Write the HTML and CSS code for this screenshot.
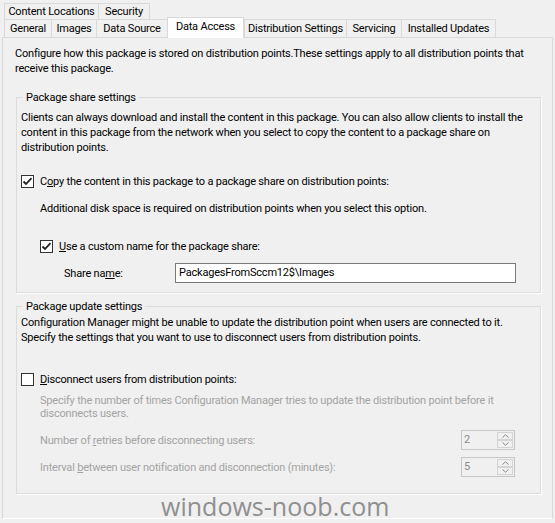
FILE: index.html
```html
<!DOCTYPE html>
<html>
<head>
<meta charset="utf-8">
<link rel="stylesheet" href="styles.css">
</head>
<body>
<div class="dialog">
  <div class="tabstrip">
    <div class="tabrow tabrow-top">
      <div class="tab t-content">Content Locations</div>
      <div class="tab t-security">Security</div>
    </div>
    <div class="tabrow tabrow-bottom">
      <div class="tab t-general">General</div>
      <div class="tab t-images">Images</div>
      <div class="tab t-source">Data Source</div>
      <div class="tab tab-active t-access">Data Access</div>
      <div class="tab t-dist">Distribution Settings</div>
      <div class="tab t-serv">Servicing</div>
      <div class="tab t-upd">Installed Updates</div>
    </div>
  </div>
  <div class="page">
    <p class="intro">Configure how this package is stored on distribution points.These settings apply to all distribution points that receive this package.</p>

    <fieldset class="group group-share">
      <legend>Package share settings</legend>
      <p class="desc">Clients can always download and install the content in this package. You can also allow clients to install the content in this package from the network when you select to copy the content to a package share on distribution points.</p>
      <label class="check-row row-copy">
        <span class="box checked"><svg viewBox="0 0 13 13" width="13" height="13"><path d="M2.5 6.5 L5 9 L10.5 3.2" fill="none" stroke="#1f1f1f" stroke-width="1.8"/></svg></span>
        <span>C<u>o</u>py the content in this package to a package share on distribution points:</span>
      </label>
      <p class="note">Additional disk space is required on distribution points when you select this option.</p>
      <label class="check-row row-custom">
        <span class="box checked"><svg viewBox="0 0 13 13" width="13" height="13"><path d="M2.5 6.5 L5 9 L10.5 3.2" fill="none" stroke="#1f1f1f" stroke-width="1.8"/></svg></span>
        <span><u>U</u>se a custom name for the package share:</span>
      </label>
      <div class="share-row">
        <span class="share-label">Share na<u>m</u>e:</span>
        <div class="textbox">PackagesFromSccm12$\Images</div>
      </div>
    </fieldset>

    <fieldset class="group group-update">
      <legend>Package update settings</legend>
      <p class="desc">Configuration Manager might be unable to update the distribution point when users are connected to it. Specify the settings that you want to use to disconnect users from distribution points.</p>
      <label class="check-row row-disconnect">
        <span class="box"></span>
        <span><u>D</u>isconnect users from distribution points:</span>
      </label>
      <p class="disabled-text">Specify the number of times Configuration Manager tries to update the distribution point before it disconnects users.</p>
      <div class="spin-row row-retries">
        <span class="disabled-label">Number of <u>r</u>etries before disconnecting users:</span>
        <div class="spinner">
          <span class="spin-value">2</span>
          <span class="spin-buttons">
            <span class="spin-btn"><svg viewBox="0 0 7 4" width="7" height="4"><path d="M0.5 3.5 L3.5 0.8 L6.5 3.5" fill="none" stroke="#8a8a8a" stroke-width="1"/></svg></span>
            <span class="spin-btn"><svg viewBox="0 0 7 4" width="7" height="4"><path d="M0.5 0.5 L3.5 3.2 L6.5 0.5" fill="none" stroke="#8a8a8a" stroke-width="1"/></svg></span>
          </span>
        </div>
      </div>
      <div class="spin-row row-interval">
        <span class="disabled-label">Interval <u>b</u>etween user notification and disconnection (minutes):</span>
        <div class="spinner">
          <span class="spin-value">5</span>
          <span class="spin-buttons">
            <span class="spin-btn"><svg viewBox="0 0 7 4" width="7" height="4"><path d="M0.5 3.5 L3.5 0.8 L6.5 3.5" fill="none" stroke="#8a8a8a" stroke-width="1"/></svg></span>
            <span class="spin-btn"><svg viewBox="0 0 7 4" width="7" height="4"><path d="M0.5 0.5 L3.5 3.2 L6.5 0.5" fill="none" stroke="#8a8a8a" stroke-width="1"/></svg></span>
          </span>
        </div>
      </div>
    </fieldset>
  </div>
</div>
<div class="watermark">windows-noob.com</div>
</body>
</html>
```
FILE: styles.css
```css
* { box-sizing: border-box; }
html, body { margin: 0; padding: 0; }
body {
  position: relative;
  background: #f0f0f0;
  font-family: Roboto, "Liberation Sans", sans-serif;
  font-size: 11px;
  letter-spacing: -0.2px;
  line-height: 15px;
  color: #000;
  width: 555px;
  height: 523px;
  overflow: hidden;
}
.dialog { padding: 3px 2px 0 2px; }

/* tabs */
.tabstrip { padding-left: 2px; }
.tabrow { display: flex; }
.tabrow-top { height: 16px; }
.tabrow-bottom { height: 18px; position: relative; z-index: 2; }
.tab {
  border: 1px solid #d9d9d9;
  border-left-width: 0;
  background: #f0f0f0;
  text-align: center;
  white-space: nowrap;
}
.tab:first-child { border-left-width: 1px; }
.tabrow-top .tab { border-bottom: 0; line-height: 15px; }
.tabrow-bottom .tab { border-bottom: 0; line-height: 17px; }
.t-content { width: 95px; }
.t-security { width: 51px; }
.t-general { width: 48px; }
.t-images { width: 45px; }
.t-source { width: 71px; }
.t-access { width: 77px; }
.t-dist { width: 103px; }
.t-serv { width: 55px; }
.t-upd { width: 94px; }
.tab-active {
  background: #fff;
  border-left-width: 1px;
  margin: -2px -1px -1px -1px;
  height: 21px;
  line-height: 18px;
  position: relative;
}
.tab-active + .tab { border-left-width: 1px; margin-left: 1px; }

/* page */
.page {
  height: 482px;
  border: 1px solid #d9d9d9;
  border-bottom-color: #fff;
  padding: 8px 0 0 12px;
}
p { margin: 0; }
.intro { width: 530px; }

.group {
  margin: 14px 0 0 1px;
  width: 525px;
  padding: 5px 8px 0 4px;
  border: 1px solid #dcdcdc;
  box-shadow: 1px 1px 0 #fff;
  min-width: 0;
}
.group legend {
  padding: 0 3px 0 4px;
  margin-left: 1px;
  line-height: 15px;
}
.group-share { height: 203px; }
.group-update { margin-top: 6px; height: 195px; padding-top: 1px; }

.check-row { display: flex; align-items: center; height: 15px; }
.box {
  width: 13px; height: 13px;
  border: 1px solid #333;
  background: #fff;
  margin-right: 6px;
  display: flex; align-items: center; justify-content: center;
  flex: none;
}
.box svg { display: block; margin: -1px; }
.row-copy { margin-top: 19px; }
.note { margin: 12px 0 0 19px; }
.row-custom { margin: 23px 0 0 19px; }
.share-row { display: flex; align-items: center; margin: 9px 0 0 43px; height: 20px; }
.share-label { width: 111px; }
.textbox {
  width: 341px; height: 20px;
  background: #fff;
  border: 1px solid #7a7a7a;
  padding-left: 3px;
  line-height: 18px;
}

.row-disconnect { margin-top: 27px; }
.disabled-text, .disabled-label { color: #a3a3a3; }
.disabled-text { margin: 7px 0 0 19px; line-height: 13px; width: 470px; }
.spin-row { display: flex; align-items: center; justify-content: space-between; height: 20px; margin: 0 17px 0 19px; }
.row-retries { margin-top: 10px; }
.row-interval { margin-top: 7px; }
.spinner {
  display: flex; width: 54px; height: 20px;
  border: 1px solid #c6c6c6;
  background: #f0f0f0;
}
.spin-value { flex: 1; padding-left: 2px; color: #8a8a8a; line-height: 18px; }
.spin-buttons { width: 18px; display: flex; flex-direction: column; padding: 1px; }
.spin-btn {
  flex: 1; border: 1px solid #d4d4d4; background: #f0f0f0;
  display: flex; align-items: center; justify-content: center;
}
.spin-btn svg { display: block; }

.watermark {
  position: absolute;
  left: 161px;
  top: 489px;
  font-family: "Open Sans", sans-serif;
  font-size: 25px;
  letter-spacing: 0.02px;
  line-height: normal;
  color: #8f8f8f;
}
```
